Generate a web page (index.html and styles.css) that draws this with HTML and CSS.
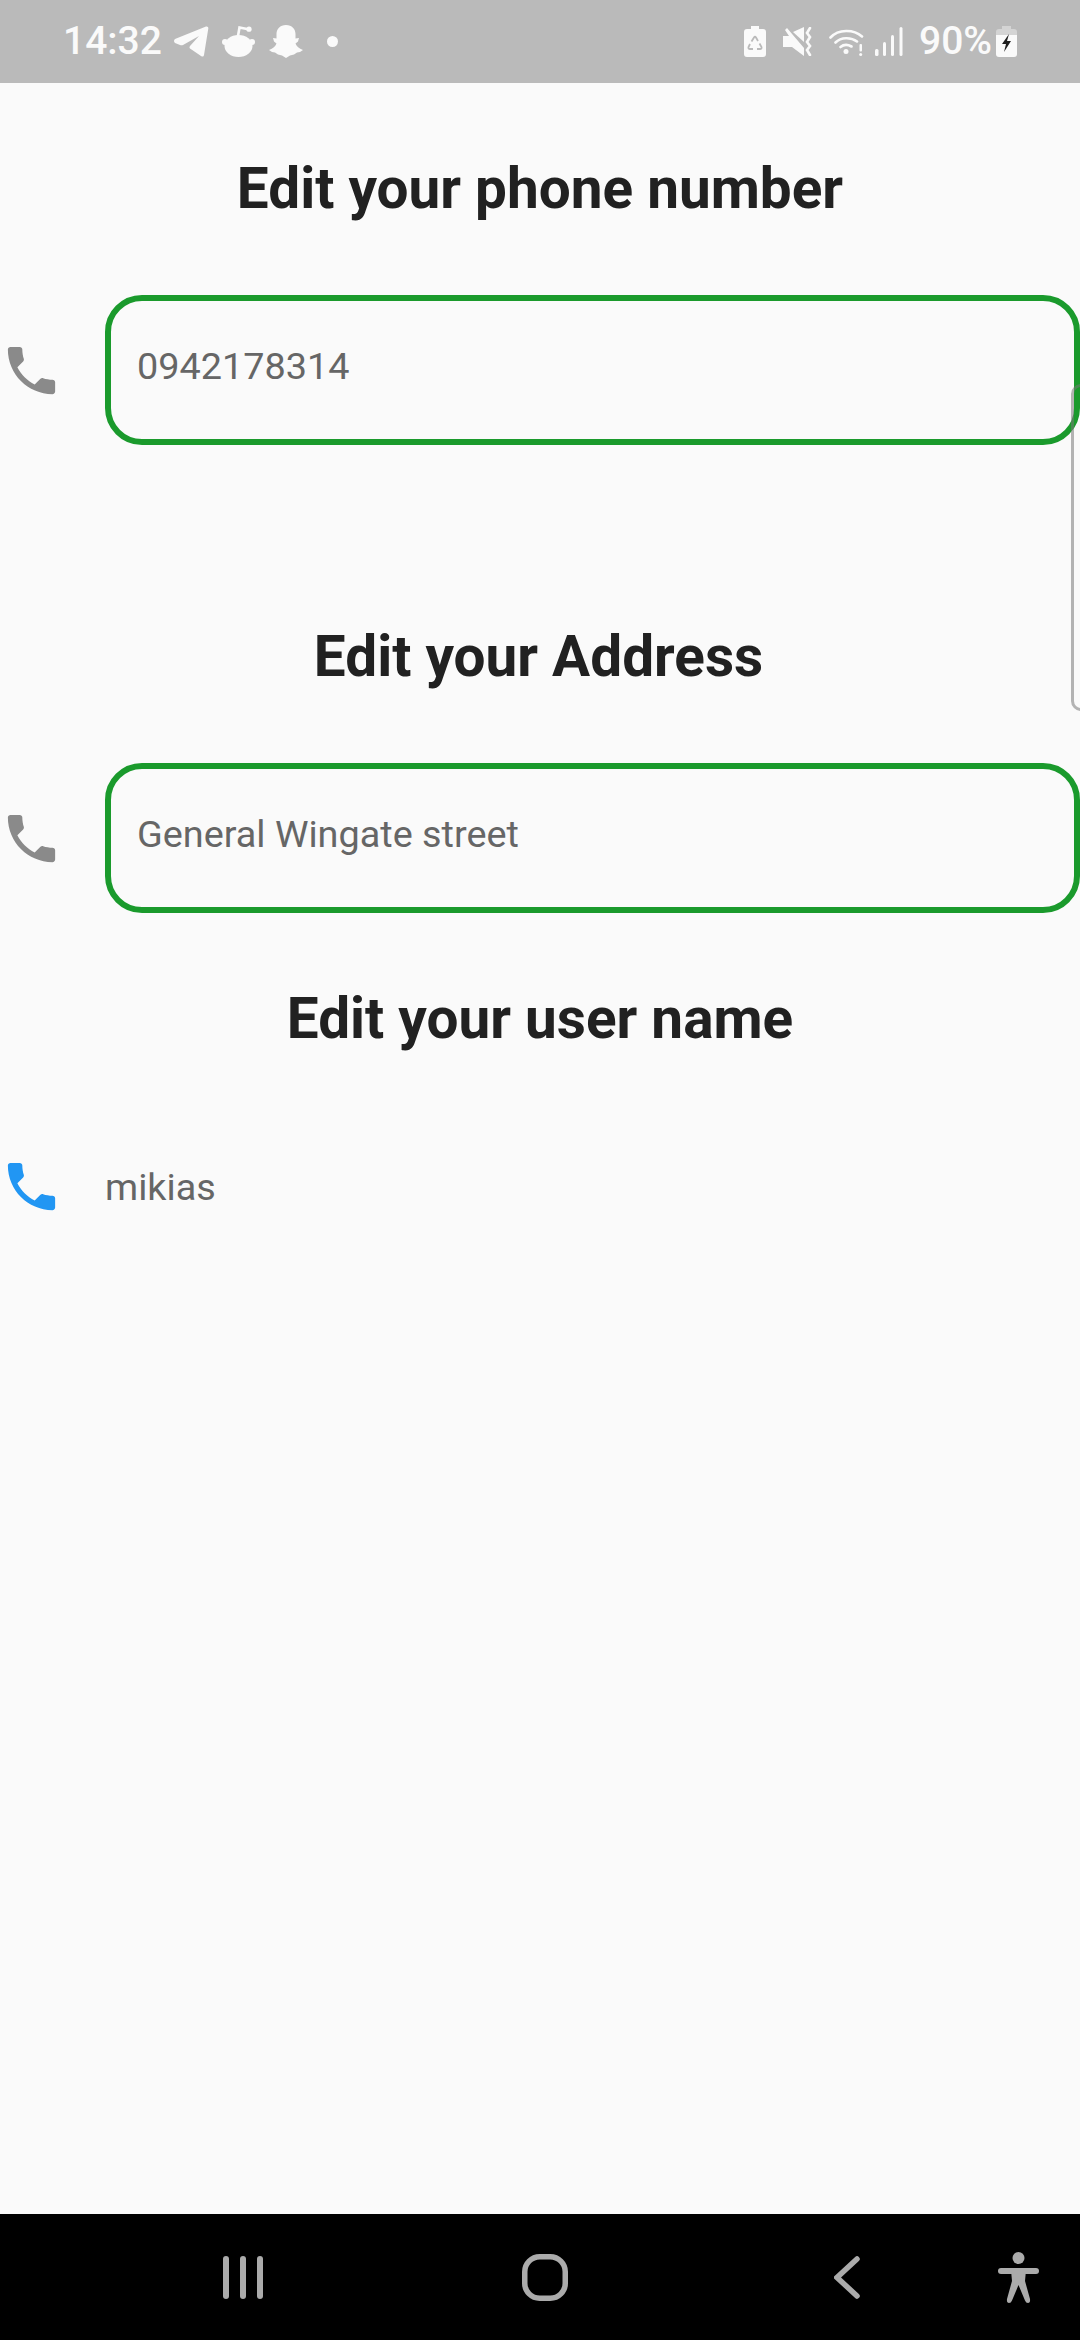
FILE: index.html
```html
<!DOCTYPE html>
<html lang="en">
<head>
    <meta charset="UTF-8">
    <meta name="viewport" content="width=device-width, initial-scale=1.0">
    <title>Edit profile</title>
    <link rel="stylesheet" href="styles.css">
</head>
<body>
    <svg class="defs" width="0" height="0">
        <symbol id="phone" viewBox="0 0 24 24">
            <path d="M6.62 10.79c1.44 2.83 3.76 5.14 6.59 6.59l2.2-2.2c.27-.27.67-.36 1.02-.24 1.12.37 2.33.57 3.57.57.55 0 1 .45 1 1V20c0 .55-.45 1-1 1-9.39 0-17-7.61-17-17 0-.55.45-1 1-1h3.5c.55 0 1 .45 1 1 0 1.25.2 2.45.57 3.57.11.35.03.74-.25 1.02l-2.2 2.2z"/>
        </symbol>
    </svg>

    <div class="screen">
        <header class="status-bar">
            <span class="time">14:32</span>
            <svg class="ic-telegram" viewBox="0 0 35 31"><path d="M1 13L32 .5Q34.6 0 34.3 2.5L30 29Q29.5 31.5 27 30L16 22.5Q15 21.5 16 20L25 10 9 19Q7.5 19.5 6 19L1 17Q-1 15 1 13z"/></svg>
            <svg class="ic-reddit" viewBox="0 0 33 31">
                <circle cx="3" cy="16" r="3"/><circle cx="30" cy="16" r="3"/>
                <ellipse cx="16.500" cy="20" rx="14" ry="11"/>
                <path class="thin" d="M16 10L17.500 1.500 25 3"/>
                <circle cx="27" cy="3.200" r="2.600"/>
            </svg>
            <svg class="ic-snap" viewBox="0 0 34 34"><path d="M17 0C23 0 26.500 4 26.500 9L26.500 13.500 30 13 29 16.500 26.500 18.500C27.500 21.500 30 23.500 34 25L31 27 28 27.500 25 29.500 21 30.500 17 33 13 30.500 9 29.500 6 27.500 3 27 0 25C4 23.500 6.500 21.500 7.500 18.500L5 16.500 4 13 7.500 13.500 7.500 9C7.500 4 11 0 17 0z"/></svg>
            <span class="dot"></span>

            <span class="status-right">
                <svg class="ic-batt-saver" viewBox="0 0 22 31">
                    <path d="M7 0H15V3H19Q22 3 22 6V28Q22 31 19 31H3Q0 31 0 28V6Q0 3 3 3H7z"/>
                    <path class="cut" d="M7.500 15.500L10 11.500Q11 10 12 11.500L14 15M15.500 17.500L17.500 21Q18 23 16 23H13M9 23H6Q4 23 4.500 21L6 18"/>
                </svg>
                <svg class="ic-mute" viewBox="0 0 29 29">
                    <path d="M0 9H6L2 3 4 1 21 21V29L9 20H0z"/>
                    <path d="M10 5L21 0V15z"/>
                    <path class="thin" d="M27 1L24 6 27 10 24 15 27 19 24 23 27 28"/>
                </svg>
                <svg class="ic-wifi" viewBox="0 0 36 29">
                    <path class="thin" d="M1.500 10.500C9.500 2 24.500 2 33 9.500M6.500 15.500C12 10 22 10 28 14.500M11.500 20C14.500 17.500 19 17.500 22.500 19.500"/>
                    <circle cx="17" cy="24.500" r="2.500"/>
                    <rect x="30.500" y="17" width="2.500" height="7.500" rx="1"/><circle cx="31.700" cy="27.500" r="1.500"/>
                </svg>
                <svg class="ic-signal" viewBox="0 0 28 29">
                    <rect x="0" y="22" width="3.500" height="7" rx="1.500"/>
                    <rect x="8" y="15" width="3" height="14" rx="1.500"/>
                    <rect x="16" y="8" width="3" height="21" rx="1.500"/>
                    <rect x="24.500" y="0" width="3" height="29" rx="1.500"/>
                </svg>
                <span class="battery-pct">90%</span>
                <svg class="ic-batt-charge" viewBox="0 0 21 31">
                    <path class="faded" d="M6 0H15V3H6z"/>
                    <path class="faded" d="M3 3H18Q21 3 21 6V10H0V6Q0 3 3 3z"/>
                    <path d="M0 9H21V28Q21 31 18 31H3Q0 31 0 28z"/>
                    <path class="bolt" d="M13 8L6 18H10L8 26 15 15H11z"/>
                </svg>
            </span>
        </header>

        <main class="form">
            <h2 class="title title-phone">Edit your phone number</h2>
            <div class="field-row">
                <svg class="phone-icon"><use href="#phone"/></svg>
                <div class="field">0942178314</div>
            </div>

            <h2 class="title title-address">Edit your Address</h2>
            <div class="field-row">
                <svg class="phone-icon"><use href="#phone"/></svg>
                <div class="field">General Wingate street</div>
            </div>

            <h2 class="title title-name">Edit your user name</h2>
            <div class="field-row plain-row">
                <svg class="phone-icon active"><use href="#phone"/></svg>
                <div class="plain-value">mikias</div>
            </div>
        </main>

        <div class="scroll-thumb"></div>

        <nav class="nav-bar">
            <svg class="ic-recents" viewBox="0 0 40 43">
                <rect x="0" y="0" width="6" height="43" rx="3"/>
                <rect x="17" y="0" width="6" height="43" rx="3"/>
                <rect x="34" y="0" width="6" height="43" rx="3"/>
            </svg>
            <svg class="ic-home" viewBox="0 0 46 47"><rect x="2.750" y="2.750" width="40.500" height="41.500" rx="15"/></svg>
            <svg class="ic-back" viewBox="0 0 26 43"><path d="M23 3L3 21.500 23 40"/></svg>
            <svg class="ic-person" viewBox="0 0 41 51">
                <circle cx="20.500" cy="6" r="6"/>
                <rect x="0" y="16" width="41" height="6" rx="3"/>
                <path d="M13 18H28L27 29 32 47Q32.500 51 30 51 28 51 27 48.500L20.500 33 14 48.500Q13 51 11 51 8.500 51 9 47L14 29z"/>
            </svg>
        </nav>
    </div>
</body>
</html>
```

FILE: styles.css
```css
* {
    box-sizing: border-box;
}
body {
    margin: 0;
    background: #fafafa;
    font-family: Roboto, "Liberation Sans", sans-serif;
}
.defs {
    position: absolute;
}
.screen {
    position: relative;
    display: flex;
    flex-direction: column;
    width: 1080px;
    height: 2340px;
    overflow: hidden;
}

/* status bar */
.status-bar {
    display: flex;
    align-items: center;
    flex: 0 0 83px;
    padding-left: 63px;
    background: #bababa;
    color: #fafafa;
    fill: #fafafa;
}
.status-bar svg {
    display: block;
    flex: none;
}
.time {
    width: 111px;
    font-size: 39px;
    font-weight: 500;
    line-height: 83px;
}
.thin {
    fill: none;
    stroke: #fafafa;
    stroke-width: 2.600;
    stroke-linecap: round;
}
.ic-telegram {
    width: 35px;
    height: 31px;
}
.ic-reddit {
    width: 33px;
    height: 31px;
    margin-left: 13px;
}
.ic-snap {
    width: 34px;
    height: 34px;
    margin-left: 14px;
}
.dot {
    width: 11px;
    height: 11px;
    margin-left: 24px;
    border-radius: 50%;
    background: #fafafa;
}
.status-right {
    display: flex;
    align-items: center;
    margin-left: auto;
    padding-right: 63px;
}
.ic-batt-saver {
    width: 22px;
    height: 31px;
}
.cut {
    fill: none;
    stroke: #bababa;
    stroke-width: 1.800;
}
.ic-mute {
    width: 29px;
    height: 29px;
    margin-left: 17px;
}
.ic-wifi {
    width: 36px;
    height: 29px;
    margin-left: 17px;
}
.ic-signal {
    width: 28px;
    height: 29px;
    margin-left: 10px;
}
.battery-pct {
    width: 77px;
    margin-left: 16px;
    font-size: 39px;
    font-weight: 500;
    line-height: 83px;
}
.ic-batt-charge {
    width: 21px;
    height: 31px;
}
.faded {
    fill: #d4d4d4;
}
.bolt {
    fill: #1f1f1f;
}

/* form */
.form {
    flex: 1;
}
.title {
    margin: 0;
    font-size: 56.700px;
    font-weight: 700;
    line-height: 62px;
    text-align: center;
    color: #212121;
}
.title-phone {
    margin-top: 75px;
}
.title-address {
    margin-top: 181px;
    padding-right: 3px;
}
.title-name {
    margin-top: 75px;
}
.field-row {
    display: flex;
    align-items: center;
    gap: 42px;
    margin-top: 75px;
}
.phone-icon {
    flex: none;
    width: 63px;
    height: 63px;
    fill: #8a8a8a;
}
.phone-icon.active {
    fill: #2196f3;
}
.field {
    flex: 1;
    height: 150px;
    padding: 0 26px;
    border: 6px solid #1a9a2c;
    border-radius: 37px;
    font-size: 37.800px;
    line-height: 131px;
    color: #666;
}
.plain-row {
    margin-top: 105px;
}
.plain-value {
    font-size: 37.800px;
    color: #666;
}

/* overlay scroll thumb at the right edge */
.scroll-thumb {
    position: absolute;
    top: 384px;
    left: 1071px;
    width: 20px;
    height: 327px;
    border: 3px solid rgba(120, 120, 120, 0.55);
    border-radius: 12px;
}

/* nav bar */
.nav-bar {
    position: relative;
    flex: 0 0 126px;
    background: #000;
    fill: #ababab;
}
.nav-bar svg {
    position: absolute;
}
.ic-recents {
    left: 223px;
    top: 42px;
    width: 40px;
    height: 43px;
}
.ic-home {
    left: 522px;
    top: 40px;
    width: 46px;
    height: 47px;
    fill: none;
    stroke: #ababab;
    stroke-width: 5.500;
}
.ic-back {
    left: 834px;
    top: 42px;
    width: 26px;
    height: 43px;
    fill: none;
    stroke: #ababab;
    stroke-width: 5.500;
    stroke-linecap: round;
}
.ic-person {
    left: 998px;
    top: 38px;
    width: 41px;
    height: 51px;
}
```
